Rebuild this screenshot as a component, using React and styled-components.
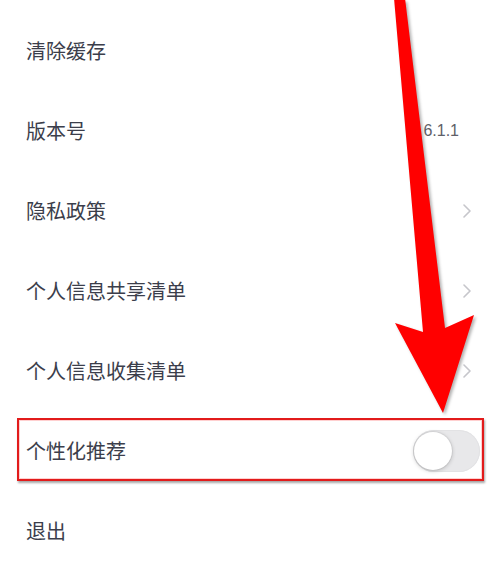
import React from "react";
import styled, { createGlobalStyle } from "styled-components";

const GlobalStyle = createGlobalStyle`
  html, body {
    margin: 0;
    padding: 0;
    background: #ffffff;
  }
  body {
    font-family: "Noto Sans CJK SC", "Noto Sans", sans-serif;
  }
`;

const Page = styled.div`
  position: relative;
  width: 497px;
  height: 562px;
  overflow: hidden;
  background: #ffffff;
`;

const List = styled.ul`
  list-style: none;
  margin: 0;
  padding: 11px 0 0;
  display: flex;
  flex-direction: column;
`;

const Row = styled.li`
  position: relative;
  height: 80px;
  display: flex;
  align-items: center;
  justify-content: space-between;
  padding: 0 25px 0 26px;
  box-sizing: border-box;
`;

const Label = styled.span`
  font-size: 20px;
  line-height: 1;
  color: #3b3e4b;
  letter-spacing: 0;
`;

const Value = styled.span`
  font-family: "Liberation Sans", "Noto Sans", sans-serif;
  font-size: 16px;
  color: #5e6068;
  margin-right: 13px;
`;

const Chevron = styled.svg`
  width: 10px;
  height: 14px;
  display: block;
`;

const Switch = styled.span`
  position: relative;
  width: 67px;
  height: 42px;
  margin-right: -8px;
  border-radius: 21px;
  background: #e8e8ea;
  box-shadow: inset 0 0 0 1px #e2e2e4;
  &::after {
    content: "";
    position: absolute;
    left: 1px;
    top: 2px;
    width: 38px;
    height: 38px;
    border-radius: 50%;
    background: #ffffff;
    box-shadow: 0 1px 4px rgba(0, 0, 0, 0.22), 0 0 0 1px rgba(0, 0, 0, 0.04);
  }
`;

const Highlight = styled.span`
  position: absolute;
  left: 17px;
  right: 13px;
  top: 7px;
  bottom: 10px;
  border: 2px solid #e21b1b;
  box-shadow: 1px 2px 2px rgba(0, 0, 0, 0.35), inset 0 0 0 1px rgba(255, 120, 120, 0.35);
  pointer-events: none;
`;

const Pointer = styled.svg`
  position: absolute;
  left: 0;
  top: 0;
  width: 497px;
  height: 562px;
  pointer-events: none;
  filter: drop-shadow(2px 2px 1.5px rgba(0, 0, 0, 0.3));
`;

const ChevronIcon = () => (
  <Chevron viewBox="0 0 10 14">
    <path d="M2 1 L8 7 L2 13" fill="none" stroke="#c6c6cb" strokeWidth="1.6" strokeLinecap="round" strokeLinejoin="round" />
  </Chevron>
);

const items = [
  { label: "清除缓存" },
  { label: "版本号", value: "6.1.1" },
  { label: "隐私政策", link: true },
  { label: "个人信息共享清单", link: true },
  { label: "个人信息收集清单", link: true },
  { label: "个性化推荐", toggle: true },
  { label: "退出" },
];

export default function App() {
  return (
    <Page>
      <GlobalStyle />
      <List>
        {items.map((item) => (
          <Row key={item.label}>
            <Label>{item.label}</Label>
            {item.value && <Value>{item.value}</Value>}
            {item.link && <ChevronIcon />}
            {item.toggle && <Switch role="switch" aria-checked="false" />}
            {item.toggle && <Highlight />}
          </Row>
        ))}
      </List>
      <Pointer viewBox="0 0 497 562">
        <polygon
          points="394,-2 405,-2 445,328 474,315 443,413 395,323 423,332"
          fill="#ff0000"
        />
      </Pointer>
    </Page>
  );
}
